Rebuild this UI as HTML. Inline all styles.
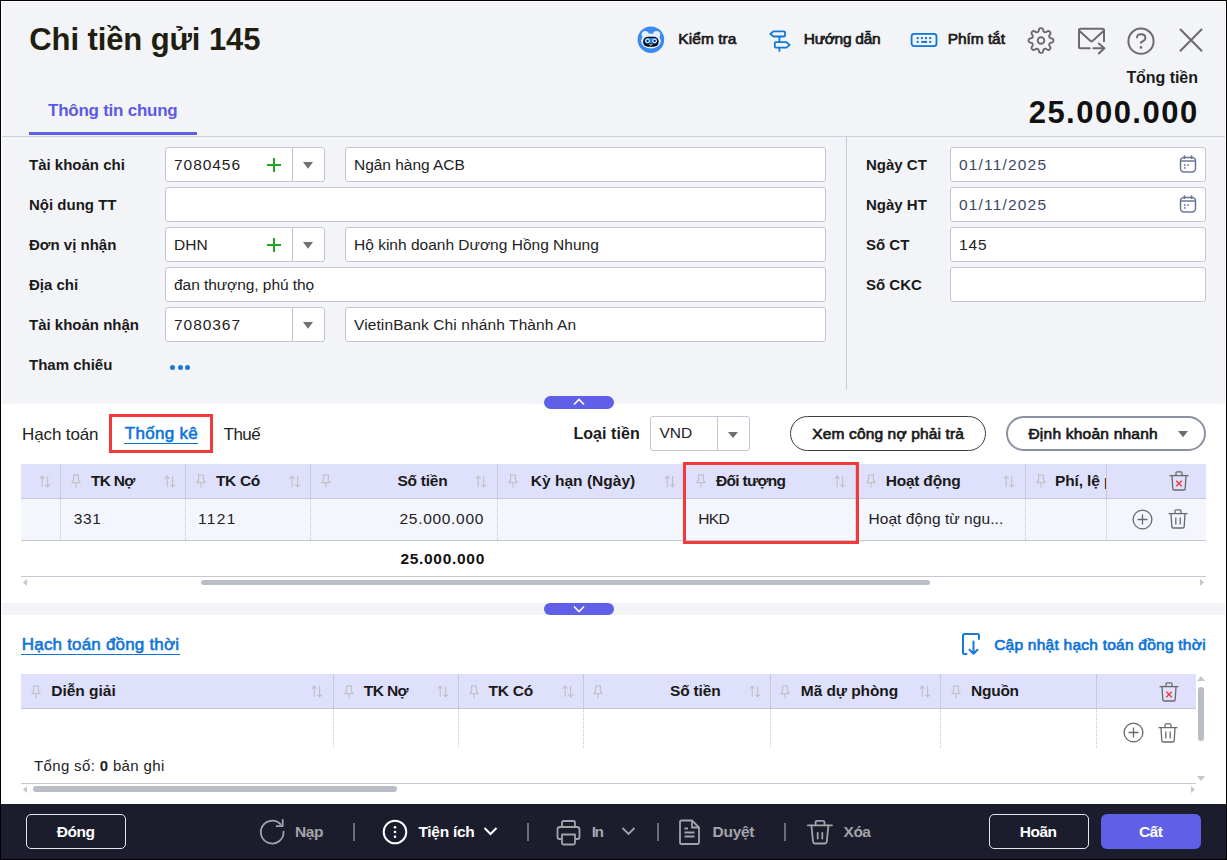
<!DOCTYPE html>
<html><head><meta charset="utf-8"><style>
html,body{margin:0;padding:0;width:1227px;height:860px;overflow:hidden;background:#000}
body{position:relative;font-family:"Liberation Sans",sans-serif}
.t{position:absolute;white-space:nowrap}
svg{overflow:visible}
</style></head><body>
<div style="position:absolute;left:0px;top:0px;width:1227px;height:860px;background:#000"></div>
<div style="position:absolute;left:1px;top:1px;width:1225px;height:858px;background:#fff"></div>
<div style="position:absolute;left:2px;top:2px;width:1223px;height:402px;background:#f3f4f8"></div>
<div style="position:absolute;left:2px;top:136px;width:1223px;height:1px;background:#cdd0dc"></div>
<div class="t" style="left:29.30px;top:20.70px;font-size:31px;line-height:37px;font-weight:700;color:#1f1e10;letter-spacing:-0.100px;">Chi tiền gửi 145</div>
<svg style="position:absolute;left:637px;top:26px" width="28" height="28" viewBox="0 0 28 28"><circle cx="13.9" cy="13.7" r="13.3" fill="#3a8af0"/>
<g fill="#e4effd"><circle cx="8.2" cy="8.6" r="3.6"/><circle cx="19.6" cy="8.6" r="3.6"/><ellipse cx="13.9" cy="15" rx="9.9" ry="7.6"/></g>
<rect x="6.1" y="10.8" width="15.6" height="9.9" rx="4.9" fill="#07070d"/>
<rect x="7.6" y="12" width="12.6" height="5.6" rx="2.8" fill="#1f7cf5"/>
<circle cx="10.6" cy="14.9" r="1.9" fill="#1f7cf5" stroke="#fff" stroke-width="1"/>
<circle cx="17.6" cy="14.9" r="1.9" fill="#1f7cf5" stroke="#fff" stroke-width="1"/>
<circle cx="10.6" cy="14.9" r="0.8" fill="#1a1f3a"/><circle cx="17.6" cy="14.9" r="0.8" fill="#1a1f3a"/>
<path d="M12.4 18.4 Q13.9 19.9 15.4 18.4" stroke="#fff" stroke-width="1" fill="none"/></svg>
<div class="t" style="left:678.35px;top:28.05px;font-size:15.5px;line-height:21.5px;font-weight:400;color:#1a1a1a;letter-spacing:0.043px;-webkit-text-stroke:0.70px #1a1a1a;">Kiểm tra</div>
<svg style="position:absolute;left:768px;top:29px" width="24" height="24" viewBox="0 0 24 24"><g fill="none" stroke="#0f78dc" stroke-width="1.8" stroke-linejoin="round">
<path d="M5.6 2.3 H16 Q17 2.3 17 3.3 V6.5 Q17 7.5 16 7.5 H5.6 L2.3 4.9 Z"/><path d="M7.8 13.2 H18.4 L21.7 15.9 L18.4 18.6 H7.8 Q6.8 18.6 6.8 17.6 V14.2 Q6.8 13.2 7.8 13.2 Z"/><path d="M11.4 7.5 V13.2 M11.4 18.6 V22.8"/></g></svg>
<div class="t" style="left:803.75px;top:28.25px;font-size:15.5px;line-height:21.5px;font-weight:400;color:#1a1a1a;letter-spacing:-0.287px;-webkit-text-stroke:0.70px #1a1a1a;">Hướng dẫn</div>
<svg style="position:absolute;left:910px;top:32px" width="28" height="16" viewBox="0 0 28 16"><rect x="1.6" y="1.8" width="24.9" height="12.4" rx="2.6" fill="none" stroke="#0b75d8" stroke-width="1.8"/>
<g fill="#0b75d8"><rect x="6.7" y="5.1" width="2" height="2"/><rect x="10.9" y="5.1" width="2" height="2"/><rect x="15" y="5.1" width="2" height="2"/><rect x="19.2" y="5.1" width="2" height="2"/>
<rect x="6.7" y="8.9" width="2" height="2"/><rect x="11.3" y="8.9" width="5.8" height="2"/><rect x="19.2" y="8.9" width="2" height="2"/></g></svg>
<div class="t" style="left:947.75px;top:28.05px;font-size:15.5px;line-height:21.5px;font-weight:400;color:#1a1a1a;letter-spacing:-0.071px;-webkit-text-stroke:0.70px #1a1a1a;">Phím tắt</div>
<svg style="position:absolute;left:1026px;top:26px" width="30" height="30" viewBox="0 0 30 30"><path d="M27.40 14.50 L27.39 14.82 L27.34 15.15 L27.25 15.46 L27.10 15.77 L26.84 16.06 L26.43 16.31 L25.86 16.51 L25.22 16.67 L24.66 16.82 L24.24 16.97 L23.95 17.15 L23.76 17.35 L23.62 17.55 L23.50 17.76 L23.41 17.98 L23.32 18.21 L23.25 18.44 L23.21 18.68 L23.20 18.95 L23.28 19.28 L23.47 19.69 L23.77 20.19 L24.10 20.76 L24.36 21.30 L24.47 21.77 L24.45 22.15 L24.35 22.48 L24.18 22.77 L23.99 23.03 L23.77 23.27 L23.53 23.49 L23.27 23.68 L22.98 23.85 L22.65 23.95 L22.27 23.97 L21.80 23.86 L21.26 23.60 L20.69 23.27 L20.19 22.97 L19.78 22.78 L19.45 22.70 L19.18 22.71 L18.94 22.75 L18.71 22.82 L18.48 22.91 L18.26 23.00 L18.05 23.12 L17.85 23.26 L17.65 23.45 L17.47 23.74 L17.32 24.16 L17.17 24.72 L17.01 25.36 L16.81 25.93 L16.56 26.34 L16.27 26.60 L15.96 26.75 L15.65 26.84 L15.32 26.89 L15.00 26.90 L14.68 26.89 L14.35 26.84 L14.04 26.75 L13.73 26.60 L13.44 26.34 L13.19 25.93 L12.99 25.36 L12.83 24.72 L12.68 24.16 L12.53 23.74 L12.35 23.45 L12.15 23.26 L11.95 23.12 L11.74 23.00 L11.52 22.91 L11.29 22.82 L11.06 22.75 L10.82 22.71 L10.55 22.70 L10.22 22.78 L9.81 22.97 L9.31 23.27 L8.74 23.60 L8.20 23.86 L7.73 23.97 L7.35 23.95 L7.02 23.85 L6.73 23.68 L6.47 23.49 L6.23 23.27 L6.01 23.03 L5.82 22.77 L5.65 22.48 L5.55 22.15 L5.53 21.77 L5.64 21.30 L5.90 20.76 L6.23 20.19 L6.53 19.69 L6.72 19.28 L6.80 18.95 L6.79 18.68 L6.75 18.44 L6.68 18.21 L6.59 17.98 L6.50 17.76 L6.38 17.55 L6.24 17.35 L6.05 17.15 L5.76 16.97 L5.34 16.82 L4.78 16.67 L4.14 16.51 L3.57 16.31 L3.16 16.06 L2.90 15.77 L2.75 15.46 L2.66 15.15 L2.61 14.82 L2.60 14.50 L2.61 14.18 L2.66 13.85 L2.75 13.54 L2.90 13.23 L3.16 12.94 L3.57 12.69 L4.14 12.49 L4.78 12.33 L5.34 12.18 L5.76 12.03 L6.05 11.85 L6.24 11.65 L6.38 11.45 L6.50 11.24 L6.59 11.02 L6.68 10.79 L6.75 10.56 L6.79 10.32 L6.80 10.05 L6.72 9.72 L6.53 9.31 L6.23 8.81 L5.90 8.24 L5.64 7.70 L5.53 7.23 L5.55 6.85 L5.65 6.52 L5.82 6.23 L6.01 5.97 L6.23 5.73 L6.47 5.51 L6.73 5.32 L7.02 5.15 L7.35 5.05 L7.73 5.03 L8.20 5.14 L8.74 5.40 L9.31 5.73 L9.81 6.03 L10.22 6.22 L10.55 6.30 L10.82 6.29 L11.06 6.25 L11.29 6.18 L11.52 6.09 L11.74 6.00 L11.95 5.88 L12.15 5.74 L12.35 5.55 L12.53 5.26 L12.68 4.84 L12.83 4.28 L12.99 3.64 L13.19 3.07 L13.44 2.66 L13.73 2.40 L14.04 2.25 L14.35 2.16 L14.68 2.11 L15.00 2.10 L15.32 2.11 L15.65 2.16 L15.96 2.25 L16.27 2.40 L16.56 2.66 L16.81 3.07 L17.01 3.64 L17.17 4.28 L17.32 4.84 L17.47 5.26 L17.65 5.55 L17.85 5.74 L18.05 5.88 L18.26 6.00 L18.48 6.09 L18.71 6.18 L18.94 6.25 L19.18 6.29 L19.45 6.30 L19.78 6.22 L20.19 6.03 L20.69 5.73 L21.26 5.40 L21.80 5.14 L22.27 5.03 L22.65 5.05 L22.98 5.15 L23.27 5.32 L23.53 5.51 L23.77 5.73 L23.99 5.97 L24.18 6.23 L24.35 6.52 L24.45 6.85 L24.47 7.23 L24.36 7.70 L24.10 8.24 L23.77 8.81 L23.47 9.31 L23.28 9.72 L23.20 10.05 L23.21 10.32 L23.25 10.56 L23.32 10.79 L23.41 11.02 L23.50 11.24 L23.62 11.45 L23.76 11.65 L23.95 11.85 L24.24 12.03 L24.66 12.18 L25.22 12.33 L25.86 12.49 L26.43 12.69 L26.84 12.94 L27.10 13.23 L27.25 13.54 L27.34 13.85 L27.39 14.18Z" fill="none" stroke="#6b6b6b" stroke-width="1.9" stroke-linejoin="round"/><circle cx="15" cy="14.5" r="3.3" fill="none" stroke="#6b6b6b" stroke-width="1.9"/></svg>
<svg style="position:absolute;left:1070px;top:20px" width="40" height="40" viewBox="0 0 40 40"><g fill="none" stroke="#6b6b6b" stroke-width="2" stroke-linecap="round" stroke-linejoin="round">
<path d="M19.7 28.3 H10.5 Q9 28.3 9 26.8 V10.3 Q9 8.8 10.5 8.8 H32.5 Q34 8.8 34 10.3 V21.3"/>
<path d="M9.5 11 L20.8 21.2 Q21.5 21.7 22.2 21.2 L33.5 11"/>
<path d="M23.4 28.2 H34.4 M28.8 23.5 L34.4 28.2 L28.8 33.5"/></g></svg>
<svg style="position:absolute;left:1120px;top:20px" width="42" height="42" viewBox="0 0 42 42"><circle cx="21" cy="21.2" r="12.6" fill="none" stroke="#6b6b6b" stroke-width="2"/>
<path d="M17 17.6 Q17 14.3 21 14.3 Q25.4 14.3 25.4 17.8 Q25.4 20.3 21 22.3 V22.8" fill="none" stroke="#6b6b6b" stroke-width="1.9" stroke-linecap="round"/>
<circle cx="21" cy="27.4" r="1.3" fill="#6b6b6b"/></svg>
<svg style="position:absolute;left:1170px;top:20px" width="42" height="42" viewBox="0 0 42 42"><path d="M10.5 9.5 L31.5 30.8 M31.5 9.5 L10.5 30.8" stroke="#6b6b6b" stroke-width="2" stroke-linecap="round"/></svg>
<div class="t" style="left:1126.40px;top:66.60px;font-size:16px;line-height:22px;font-weight:700;color:#1a1a1a;letter-spacing:-0.050px;">Tổng tiền</div>
<div class="t" style="left:1028.70px;top:93.50px;font-size:31px;line-height:37px;font-weight:700;color:#111;letter-spacing:1.478px;">25.000.000</div>
<div class="t" style="left:48.00px;top:98.60px;font-size:17px;line-height:23px;font-weight:700;color:#5b5be2;letter-spacing:-0.243px;">Thông tin chung</div>
<div style="position:absolute;left:29px;top:132px;width:168px;height:3px;background:#5f5fe8"></div>
<div style="position:absolute;left:846px;top:137px;width:1px;height:253px;background:#c9ccd8"></div>
<div class="t" style="left:29.00px;top:154.00px;font-size:15px;line-height:21px;font-weight:700;color:#1a1a1a;letter-spacing:0.000px;">Tài khoản chi</div>
<div class="t" style="left:29.00px;top:194.00px;font-size:15px;line-height:21px;font-weight:700;color:#1a1a1a;letter-spacing:0.000px;">Nội dung TT</div>
<div class="t" style="left:29.00px;top:234.00px;font-size:15px;line-height:21px;font-weight:700;color:#1a1a1a;letter-spacing:0.000px;">Đơn vị nhận</div>
<div class="t" style="left:29.00px;top:274.00px;font-size:15px;line-height:21px;font-weight:700;color:#1a1a1a;letter-spacing:0.000px;">Địa chỉ</div>
<div class="t" style="left:29.00px;top:314.00px;font-size:15px;line-height:21px;font-weight:700;color:#1a1a1a;letter-spacing:0.000px;">Tài khoản nhận</div>
<div class="t" style="left:29.00px;top:354.00px;font-size:15px;line-height:21px;font-weight:700;color:#1a1a1a;letter-spacing:0.000px;">Tham chiếu</div>
<div style="position:absolute;left:165px;top:147px;width:160px;height:35px;box-sizing:border-box;background:#fff;border:1px solid #c4c7d3;border-radius:3px"></div>
<div style="position:absolute;left:292px;top:147px;width:1px;height:35px;background:#c4c7d3"></div>
<svg style="position:absolute;left:302.6px;top:162.3px" width="10" height="6.7" viewBox="0 0 10 6.7"><path d="M0 0 H10 L5.0 6.7Z" fill="#707070"/></svg>
<svg style="position:absolute;left:267px;top:158px" width="14" height="14" viewBox="0 0 14 14"><path d="M7 0 V14 M0 7 H14" stroke="#22a526" stroke-width="2"/></svg>
<div class="t" style="left:174.00px;top:153.75px;font-size:15.5px;line-height:21.5px;font-weight:400;color:#222;letter-spacing:0.950px;">7080456</div>
<div style="position:absolute;left:345px;top:147px;width:481px;height:35px;box-sizing:border-box;background:#fff;border:1px solid #c4c7d3;border-radius:3px"></div>
<div class="t" style="left:354.00px;top:153.75px;font-size:15.5px;line-height:21.5px;font-weight:400;color:#222;letter-spacing:-0.025px;">Ngân hàng ACB</div>
<div style="position:absolute;left:165px;top:187px;width:661px;height:35px;box-sizing:border-box;background:#fff;border:1px solid #c4c7d3;border-radius:3px"></div>
<div style="position:absolute;left:165px;top:227px;width:160px;height:35px;box-sizing:border-box;background:#fff;border:1px solid #c4c7d3;border-radius:3px"></div>
<div style="position:absolute;left:292px;top:227px;width:1px;height:35px;background:#c4c7d3"></div>
<svg style="position:absolute;left:302.6px;top:242.3px" width="10" height="6.7" viewBox="0 0 10 6.7"><path d="M0 0 H10 L5.0 6.7Z" fill="#707070"/></svg>
<svg style="position:absolute;left:267px;top:238px" width="14" height="14" viewBox="0 0 14 14"><path d="M7 0 V14 M0 7 H14" stroke="#22a526" stroke-width="2"/></svg>
<div class="t" style="left:174.00px;top:233.75px;font-size:15.5px;line-height:21.5px;font-weight:400;color:#222;letter-spacing:0.000px;">DHN</div>
<div style="position:absolute;left:345px;top:227px;width:481px;height:35px;box-sizing:border-box;background:#fff;border:1px solid #c4c7d3;border-radius:3px"></div>
<div class="t" style="left:354.00px;top:233.75px;font-size:15.5px;line-height:21.5px;font-weight:400;color:#222;letter-spacing:0.007px;">Hộ kinh doanh Dương Hồng Nhung</div>
<div style="position:absolute;left:165px;top:267px;width:661px;height:35px;box-sizing:border-box;background:#fff;border:1px solid #c4c7d3;border-radius:3px"></div>
<div class="t" style="left:174.00px;top:273.75px;font-size:15.5px;line-height:21.5px;font-weight:400;color:#222;letter-spacing:-0.056px;">đan thượng, phú thọ</div>
<div style="position:absolute;left:165px;top:307px;width:160px;height:35px;box-sizing:border-box;background:#fff;border:1px solid #c4c7d3;border-radius:3px"></div>
<div style="position:absolute;left:292px;top:307px;width:1px;height:35px;background:#c4c7d3"></div>
<svg style="position:absolute;left:302.6px;top:322.3px" width="10" height="6.7" viewBox="0 0 10 6.7"><path d="M0 0 H10 L5.0 6.7Z" fill="#707070"/></svg>
<div class="t" style="left:174.00px;top:313.75px;font-size:15.5px;line-height:21.5px;font-weight:400;color:#222;letter-spacing:0.950px;">7080367</div>
<div style="position:absolute;left:345px;top:307px;width:481px;height:35px;box-sizing:border-box;background:#fff;border:1px solid #c4c7d3;border-radius:3px"></div>
<div class="t" style="left:354.00px;top:313.75px;font-size:15.5px;line-height:21.5px;font-weight:400;color:#222;letter-spacing:0.107px;">VietinBank Chi nhánh Thành An</div>
<div style="position:absolute;left:170.0px;top:364.5px;width:5px;height:5px;border-radius:50%;background:#1a78d8"></div>
<div style="position:absolute;left:177.5px;top:364.5px;width:5px;height:5px;border-radius:50%;background:#1a78d8"></div>
<div style="position:absolute;left:185.0px;top:364.5px;width:5px;height:5px;border-radius:50%;background:#1a78d8"></div>
<div class="t" style="left:866.00px;top:154.00px;font-size:15px;line-height:21px;font-weight:700;color:#1a1a1a;letter-spacing:0.000px;">Ngày CT</div>
<div style="position:absolute;left:950px;top:147px;width:256px;height:35px;box-sizing:border-box;background:#fff;border:1px solid #c4c7d3;border-radius:3px"></div>
<div class="t" style="left:866.00px;top:194.00px;font-size:15px;line-height:21px;font-weight:700;color:#1a1a1a;letter-spacing:0.000px;">Ngày HT</div>
<div style="position:absolute;left:950px;top:187px;width:256px;height:35px;box-sizing:border-box;background:#fff;border:1px solid #c4c7d3;border-radius:3px"></div>
<div class="t" style="left:866.00px;top:234.00px;font-size:15px;line-height:21px;font-weight:700;color:#1a1a1a;letter-spacing:0.000px;">Số CT</div>
<div style="position:absolute;left:950px;top:227px;width:256px;height:35px;box-sizing:border-box;background:#fff;border:1px solid #c4c7d3;border-radius:3px"></div>
<div class="t" style="left:866.00px;top:274.00px;font-size:15px;line-height:21px;font-weight:700;color:#1a1a1a;letter-spacing:0.000px;">Số CKC</div>
<div style="position:absolute;left:950px;top:267px;width:256px;height:35px;box-sizing:border-box;background:#fff;border:1px solid #c4c7d3;border-radius:3px"></div>
<div class="t" style="left:958.90px;top:154.05px;font-size:15.5px;line-height:21.5px;font-weight:400;color:#3d4766;letter-spacing:1.189px;">01/11/2025</div>
<svg style="position:absolute;left:1179px;top:154px" width="18" height="19" viewBox="0 0 18 19"><g fill="none" stroke="#6c7596" stroke-width="1.5"><rect x="1.5" y="3.4" width="15" height="14.5" rx="3.5"/><path d="M1.5 6.9 H16.5 M5.5 1.2 V5 M12.5 1.2 V5"/></g>
<g fill="#6c7596"><rect x="5" y="10.3" width="1.6" height="1.6"/><rect x="8.2" y="10.3" width="1.6" height="1.6"/><rect x="5" y="13.1" width="1.6" height="1.6"/></g></svg>
<div class="t" style="left:958.90px;top:194.05px;font-size:15.5px;line-height:21.5px;font-weight:400;color:#3d4766;letter-spacing:1.189px;">01/11/2025</div>
<svg style="position:absolute;left:1179px;top:194px" width="18" height="19" viewBox="0 0 18 19"><g fill="none" stroke="#6c7596" stroke-width="1.5"><rect x="1.5" y="3.4" width="15" height="14.5" rx="3.5"/><path d="M1.5 6.9 H16.5 M5.5 1.2 V5 M12.5 1.2 V5"/></g>
<g fill="#6c7596"><rect x="5" y="10.3" width="1.6" height="1.6"/><rect x="8.2" y="10.3" width="1.6" height="1.6"/><rect x="5" y="13.1" width="1.6" height="1.6"/></g></svg>
<div class="t" style="left:958.90px;top:234.05px;font-size:15.5px;line-height:21.5px;font-weight:400;color:#222;letter-spacing:0.900px;">145</div>
<div style="position:absolute;left:544px;top:396px;width:70px;height:13px;background:#5f5fe8;border-radius:7px"></div>
<svg style="position:absolute;left:573px;top:398px" width="12" height="8" viewBox="0 0 12 8"><path d="M1 6.5 L6 1.5 L11 6.5" fill="none" stroke="#fff" stroke-width="1.6"/></svg>
<div class="t" style="left:22.10px;top:422.80px;font-size:17px;line-height:23px;font-weight:400;color:#222;letter-spacing:-0.137px;">Hạch toán</div>
<div style="position:absolute;left:109px;top:414px;width:104px;height:39px;box-sizing:border-box;border:3px solid #f23a3d"></div>
<div class="t" style="left:124.69px;top:422.30px;font-size:17px;line-height:23px;font-weight:400;color:#0f74d8;letter-spacing:0.317px;-webkit-text-stroke:0.58px #0f74d8;">Thống kê</div>
<div style="position:absolute;left:124px;top:443px;width:74px;height:1px;background:#0f74d8"></div>
<div class="t" style="left:223.50px;top:422.80px;font-size:17px;line-height:23px;font-weight:400;color:#222;letter-spacing:-0.500px;">Thuế</div>
<div class="t" style="left:573.40px;top:423.10px;font-size:16px;line-height:22px;font-weight:700;color:#1a1a1a;letter-spacing:0.062px;">Loại tiền</div>
<div style="position:absolute;left:650px;top:416px;width:100px;height:35px;box-sizing:border-box;background:#fff;border:1px solid #c4c7d3;border-radius:3px"></div>
<div style="position:absolute;left:717px;top:416px;width:1px;height:35px;background:#c4c7d3"></div>
<svg style="position:absolute;left:728px;top:432px" width="10" height="6" viewBox="0 0 10 6"><path d="M0 0 H10 L5.0 6Z" fill="#707070"/></svg>
<div class="t" style="left:659.40px;top:422.45px;font-size:15.5px;line-height:21.5px;font-weight:400;color:#222;letter-spacing:0.000px;">VND</div>
<div style="position:absolute;left:790px;top:416px;width:196px;height:35px;box-sizing:border-box;border:1px solid #3c3c3c;border-radius:18px;background:#fff"></div>
<div class="t" style="left:812.25px;top:422.75px;font-size:15.5px;line-height:21.5px;font-weight:400;color:#1a1a1a;letter-spacing:0.142px;-webkit-text-stroke:0.70px #1a1a1a;">Xem công nợ phải trả</div>
<div style="position:absolute;left:1006px;top:416px;width:200px;height:35px;box-sizing:border-box;border:2px solid #8c91a1;border-radius:18px;background:#fff"></div>
<div class="t" style="left:1028.45px;top:422.75px;font-size:15.5px;line-height:21.5px;font-weight:400;color:#1a1a1a;letter-spacing:0.227px;-webkit-text-stroke:0.70px #1a1a1a;">Định khoản nhanh</div>
<svg style="position:absolute;left:1177.5px;top:431.3px" width="10" height="6.2" viewBox="0 0 10 6.2"><path d="M0 0 H10 L5.0 6.2Z" fill="#6e6e6e"/></svg>
<div style="position:absolute;left:21px;top:464px;width:1185px;height:34px;background:#dfe0fb"></div>
<div style="position:absolute;left:21px;top:498px;width:1185px;height:1px;background:#c5c7d2"></div>
<div style="position:absolute;left:21px;top:499px;width:1185px;height:41px;background:#f4f6fe"></div>
<div style="position:absolute;left:21px;top:540px;width:1185px;height:1px;background:#c5c7d2"></div>
<div style="position:absolute;left:21px;top:576px;width:1185px;height:1px;background:#c5c7d2"></div>
<div style="position:absolute;left:60px;top:464px;width:1px;height:34px;background:#c9cad6"></div>
<div style="position:absolute;left:60px;top:499px;width:0;height:41px;border-left:1px dotted #c3c3c8"></div>
<div style="position:absolute;left:185px;top:464px;width:1px;height:34px;background:#c9cad6"></div>
<div style="position:absolute;left:185px;top:499px;width:0;height:41px;border-left:1px dotted #c3c3c8"></div>
<div style="position:absolute;left:310px;top:464px;width:1px;height:34px;background:#c9cad6"></div>
<div style="position:absolute;left:310px;top:499px;width:0;height:41px;border-left:1px dotted #c3c3c8"></div>
<div style="position:absolute;left:497px;top:464px;width:1px;height:34px;background:#c9cad6"></div>
<div style="position:absolute;left:497px;top:499px;width:0;height:41px;border-left:1px dotted #c3c3c8"></div>
<div style="position:absolute;left:684px;top:464px;width:1px;height:34px;background:#c9cad6"></div>
<div style="position:absolute;left:684px;top:499px;width:0;height:41px;border-left:1px dotted #c3c3c8"></div>
<div style="position:absolute;left:855px;top:464px;width:1px;height:34px;background:#c9cad6"></div>
<div style="position:absolute;left:855px;top:499px;width:0;height:41px;border-left:1px dotted #c3c3c8"></div>
<div style="position:absolute;left:1025px;top:464px;width:1px;height:34px;background:#c9cad6"></div>
<div style="position:absolute;left:1025px;top:499px;width:0;height:41px;border-left:1px dotted #c3c3c8"></div>
<div style="position:absolute;left:1106px;top:464px;width:1px;height:34px;background:#c9cad6"></div>
<div style="position:absolute;left:1106px;top:499px;width:0;height:41px;border-left:1px dotted #c3c3c8"></div>
<svg style="position:absolute;left:39px;top:475px" width="12" height="13" viewBox="0 0 12 13"><path d="M3.2 12 V1.2 M0.8 3.6 L3.2 1.2 L5.6 3.6 M8.6 1 V11.8 M6.2 9.4 L8.6 11.8 L11 9.4" fill="none" stroke="#c2c3c9" stroke-width="1.2"/></svg>
<svg style="position:absolute;left:71px;top:474px" width="10" height="14" viewBox="0 0 10 14"><path d="M2.6 0.8 H7.4 V6.2 L9.2 8.6 H0.8 L2.6 6.2 Z M5 8.6 V13.6" fill="none" stroke="#c2c3c9" stroke-width="1.2" stroke-linejoin="round"/></svg>
<div class="t" style="left:90.90px;top:469.95px;font-size:15.5px;line-height:21.5px;font-weight:700;color:#1a1a1a;letter-spacing:-0.725px;">TK Nợ</div>
<svg style="position:absolute;left:164px;top:475px" width="12" height="13" viewBox="0 0 12 13"><path d="M3.2 12 V1.2 M0.8 3.6 L3.2 1.2 L5.6 3.6 M8.6 1 V11.8 M6.2 9.4 L8.6 11.8 L11 9.4" fill="none" stroke="#c2c3c9" stroke-width="1.2"/></svg>
<svg style="position:absolute;left:196px;top:474px" width="10" height="14" viewBox="0 0 10 14"><path d="M2.6 0.8 H7.4 V6.2 L9.2 8.6 H0.8 L2.6 6.2 Z M5 8.6 V13.6" fill="none" stroke="#c2c3c9" stroke-width="1.2" stroke-linejoin="round"/></svg>
<div class="t" style="left:216.00px;top:469.95px;font-size:15.5px;line-height:21.5px;font-weight:700;color:#1a1a1a;letter-spacing:-0.350px;">TK Có</div>
<svg style="position:absolute;left:289px;top:475px" width="12" height="13" viewBox="0 0 12 13"><path d="M3.2 12 V1.2 M0.8 3.6 L3.2 1.2 L5.6 3.6 M8.6 1 V11.8 M6.2 9.4 L8.6 11.8 L11 9.4" fill="none" stroke="#c2c3c9" stroke-width="1.2"/></svg>
<svg style="position:absolute;left:321px;top:474px" width="10" height="14" viewBox="0 0 10 14"><path d="M2.6 0.8 H7.4 V6.2 L9.2 8.6 H0.8 L2.6 6.2 Z M5 8.6 V13.6" fill="none" stroke="#c2c3c9" stroke-width="1.2" stroke-linejoin="round"/></svg>
<div class="t" style="left:397.50px;top:469.95px;font-size:15.5px;line-height:21.5px;font-weight:700;color:#1a1a1a;letter-spacing:-0.250px;">Số tiền</div>
<svg style="position:absolute;left:475px;top:475px" width="12" height="13" viewBox="0 0 12 13"><path d="M3.2 12 V1.2 M0.8 3.6 L3.2 1.2 L5.6 3.6 M8.6 1 V11.8 M6.2 9.4 L8.6 11.8 L11 9.4" fill="none" stroke="#c2c3c9" stroke-width="1.2"/></svg>
<svg style="position:absolute;left:508px;top:474px" width="10" height="14" viewBox="0 0 10 14"><path d="M2.6 0.8 H7.4 V6.2 L9.2 8.6 H0.8 L2.6 6.2 Z M5 8.6 V13.6" fill="none" stroke="#c2c3c9" stroke-width="1.2" stroke-linejoin="round"/></svg>
<div class="t" style="left:530.80px;top:469.95px;font-size:15.5px;line-height:21.5px;font-weight:700;color:#1a1a1a;letter-spacing:0.017px;">Kỳ hạn (Ngày)</div>
<svg style="position:absolute;left:664px;top:475px" width="12" height="13" viewBox="0 0 12 13"><path d="M3.2 12 V1.2 M0.8 3.6 L3.2 1.2 L5.6 3.6 M8.6 1 V11.8 M6.2 9.4 L8.6 11.8 L11 9.4" fill="none" stroke="#c2c3c9" stroke-width="1.2"/></svg>
<svg style="position:absolute;left:696px;top:474px" width="10" height="14" viewBox="0 0 10 14"><path d="M2.6 0.8 H7.4 V6.2 L9.2 8.6 H0.8 L2.6 6.2 Z M5 8.6 V13.6" fill="none" stroke="#c2c3c9" stroke-width="1.2" stroke-linejoin="round"/></svg>
<div class="t" style="left:715.90px;top:469.95px;font-size:15.5px;line-height:21.5px;font-weight:700;color:#1a1a1a;letter-spacing:-0.688px;">Đối tượng</div>
<svg style="position:absolute;left:834px;top:475px" width="12" height="13" viewBox="0 0 12 13"><path d="M3.2 12 V1.2 M0.8 3.6 L3.2 1.2 L5.6 3.6 M8.6 1 V11.8 M6.2 9.4 L8.6 11.8 L11 9.4" fill="none" stroke="#c2c3c9" stroke-width="1.2"/></svg>
<svg style="position:absolute;left:866px;top:474px" width="10" height="14" viewBox="0 0 10 14"><path d="M2.6 0.8 H7.4 V6.2 L9.2 8.6 H0.8 L2.6 6.2 Z M5 8.6 V13.6" fill="none" stroke="#c2c3c9" stroke-width="1.2" stroke-linejoin="round"/></svg>
<div class="t" style="left:885.70px;top:469.95px;font-size:15.5px;line-height:21.5px;font-weight:700;color:#1a1a1a;letter-spacing:-0.213px;">Hoạt động</div>
<svg style="position:absolute;left:1003px;top:475px" width="12" height="13" viewBox="0 0 12 13"><path d="M3.2 12 V1.2 M0.8 3.6 L3.2 1.2 L5.6 3.6 M8.6 1 V11.8 M6.2 9.4 L8.6 11.8 L11 9.4" fill="none" stroke="#c2c3c9" stroke-width="1.2"/></svg>
<svg style="position:absolute;left:1036px;top:474px" width="10" height="14" viewBox="0 0 10 14"><path d="M2.6 0.8 H7.4 V6.2 L9.2 8.6 H0.8 L2.6 6.2 Z M5 8.6 V13.6" fill="none" stroke="#c2c3c9" stroke-width="1.2" stroke-linejoin="round"/></svg>
<div style="position:absolute;left:1026px;top:464px;width:80px;height:34px;overflow:hidden">
<div class="t" style="left:29.00px;top:5.95px;font-size:15.5px;line-height:21.5px;font-weight:700;color:#1a1a1a;letter-spacing:-0.125px;">Phí, lệ p</div>
</div>
<svg style="position:absolute;left:1169px;top:471px" width="20" height="20" viewBox="0 0 20 20"><g fill="none" stroke="#6a6a6a" stroke-width="1.3" stroke-linejoin="round"><path d="M0.5 4.6 H19.5"/><path d="M7 4.6 V2 Q7 0.8 8.2 0.8 H11.8 Q13 0.8 13 2 V4.6"/><path d="M3 4.6 L3.8 17.6 Q3.9 19 5.3 19 H14.7 Q16.1 19 16.2 17.6 L17 4.6"/></g>
<path d="M7.3 9.8 L12.7 15.2 M12.7 9.8 L7.3 15.2" stroke="#ee3b3b" stroke-width="1.4"/></svg>
<div class="t" style="left:73.70px;top:507.75px;font-size:15.5px;line-height:21.5px;font-weight:400;color:#222;letter-spacing:0.650px;">331</div>
<div class="t" style="left:198.00px;top:507.75px;font-size:15.5px;line-height:21.5px;font-weight:400;color:#222;letter-spacing:1.333px;">1121</div>
<div class="t" style="left:399.50px;top:507.75px;font-size:15.5px;line-height:21.5px;font-weight:400;color:#222;letter-spacing:0.700px;">25.000.000</div>
<div class="t" style="left:698.20px;top:507.75px;font-size:15.5px;line-height:21.5px;font-weight:400;color:#222;letter-spacing:-0.600px;">HKD</div>
<div class="t" style="left:868.50px;top:507.75px;font-size:15.5px;line-height:21.5px;font-weight:400;color:#222;letter-spacing:0.061px;">Hoạt động từ ngu...</div>
<svg style="position:absolute;left:1132px;top:509px" width="21" height="21" viewBox="0 0 21 21"><circle cx="10.5" cy="10.5" r="9.4" fill="none" stroke="#6a6a6a" stroke-width="1.3"/><path d="M10.5 5.5 V15.5 M5.5 10.5 H15.5" stroke="#6a6a6a" stroke-width="1.3"/></svg>
<svg style="position:absolute;left:1167.5px;top:509.3px" width="20" height="20" viewBox="0 0 20 20"><g fill="none" stroke="#6a6a6a" stroke-width="1.3" stroke-linejoin="round"><path d="M0.5 4.6 H19.5"/><path d="M7 4.6 V2 Q7 0.8 8.2 0.8 H11.8 Q13 0.8 13 2 V4.6"/><path d="M3 4.6 L3.8 17.6 Q3.9 19 5.3 19 H14.7 Q16.1 19 16.2 17.6 L17 4.6"/><path d="M7.8 8.5 V15.5 M12.2 8.5 V15.5"/></g></svg>
<div class="t" style="left:400.40px;top:547.75px;font-size:15.5px;line-height:21.5px;font-weight:700;color:#111;letter-spacing:0.700px;">25.000.000</div>
<div style="position:absolute;left:683px;top:462px;width:176px;height:82px;box-sizing:border-box;border:3px solid #f23a3d"></div>
<div style="position:absolute;left:201px;top:580px;width:729px;height:5px;background:#b9bdc6;border-radius:3px"></div>
<svg style="position:absolute;left:23px;top:579px" width="5" height="7" viewBox="0 0 5 7"><path d="M4 0 V7 L0 3.5Z" fill="#c4c7ce"/></svg>
<svg style="position:absolute;left:1199px;top:579px" width="5" height="7" viewBox="0 0 5 7"><path d="M1 0 V7 L5 3.5Z" fill="#c4c7ce"/></svg>
<div style="position:absolute;left:2px;top:603px;width:1223px;height:12px;background:#f3f4f8"></div>
<div style="position:absolute;left:544px;top:603px;width:70px;height:12px;background:#5f5fe8;border-radius:6px"></div>
<svg style="position:absolute;left:573px;top:604.5px" width="12" height="8" viewBox="0 0 12 8"><path d="M1 1.5 L6 6.5 L11 1.5" fill="none" stroke="#fff" stroke-width="1.6"/></svg>
<div class="t" style="left:21.79px;top:632.50px;font-size:17px;line-height:23px;font-weight:400;color:#0f74d8;letter-spacing:0.190px;-webkit-text-stroke:0.58px #0f74d8;">Hạch toán đồng thời</div>
<div style="position:absolute;left:21px;top:653.5px;width:158.5px;height:1.3px;background:#0f74d8"></div>
<svg style="position:absolute;left:960px;top:631px" width="24" height="26" viewBox="0 0 24 26"><g fill="none" stroke="#1a78d8" stroke-width="2" stroke-linecap="round" stroke-linejoin="round">
<path d="M6.5 23 H4.5 Q3 23 3 21.5 V4.5 Q3 3 4.5 3 H17.5 Q19 3 19 4.5 V8"/>
<path d="M13.5 10.5 V22.5 M9.5 18.8 L13.5 22.8 L17.5 18.8"/></g></svg>
<div class="t" style="left:994.15px;top:633.95px;font-size:15.5px;line-height:21.5px;font-weight:400;color:#0f74d8;letter-spacing:0.241px;-webkit-text-stroke:0.70px #0f74d8;">Cập nhật hạch toán đồng thời</div>
<div style="position:absolute;left:21px;top:674px;width:1175px;height:34px;background:#dfe0fb"></div>
<div style="position:absolute;left:21px;top:708px;width:1175px;height:1px;background:#c5c7d2"></div>
<div style="position:absolute;left:333px;top:674px;width:1px;height:34px;background:#c9cad6"></div>
<div style="position:absolute;left:333px;top:709px;width:0;height:39px;border-left:1px dotted #c3c3c8"></div>
<div style="position:absolute;left:458px;top:674px;width:1px;height:34px;background:#c9cad6"></div>
<div style="position:absolute;left:458px;top:709px;width:0;height:39px;border-left:1px dotted #c3c3c8"></div>
<div style="position:absolute;left:583px;top:674px;width:1px;height:34px;background:#c9cad6"></div>
<div style="position:absolute;left:583px;top:709px;width:0;height:39px;border-left:1px dotted #c3c3c8"></div>
<div style="position:absolute;left:770px;top:674px;width:1px;height:34px;background:#c9cad6"></div>
<div style="position:absolute;left:770px;top:709px;width:0;height:39px;border-left:1px dotted #c3c3c8"></div>
<div style="position:absolute;left:940px;top:674px;width:1px;height:34px;background:#c9cad6"></div>
<div style="position:absolute;left:940px;top:709px;width:0;height:39px;border-left:1px dotted #c3c3c8"></div>
<div style="position:absolute;left:1096px;top:674px;width:1px;height:34px;background:#c9cad6"></div>
<div style="position:absolute;left:1096px;top:709px;width:0;height:39px;border-left:1px dotted #c3c3c8"></div>
<svg style="position:absolute;left:31px;top:685.3px" width="10" height="14" viewBox="0 0 10 14"><path d="M2.6 0.8 H7.4 V6.2 L9.2 8.6 H0.8 L2.6 6.2 Z M5 8.6 V13.6" fill="none" stroke="#c2c3c9" stroke-width="1.2" stroke-linejoin="round"/></svg>
<div class="t" style="left:51.20px;top:680.05px;font-size:15.5px;line-height:21.5px;font-weight:700;color:#1a1a1a;letter-spacing:0.000px;">Diễn giải</div>
<svg style="position:absolute;left:311px;top:685px" width="12" height="13" viewBox="0 0 12 13"><path d="M3.2 12 V1.2 M0.8 3.6 L3.2 1.2 L5.6 3.6 M8.6 1 V11.8 M6.2 9.4 L8.6 11.8 L11 9.4" fill="none" stroke="#c2c3c9" stroke-width="1.2"/></svg>
<svg style="position:absolute;left:344px;top:685.3px" width="10" height="14" viewBox="0 0 10 14"><path d="M2.6 0.8 H7.4 V6.2 L9.2 8.6 H0.8 L2.6 6.2 Z M5 8.6 V13.6" fill="none" stroke="#c2c3c9" stroke-width="1.2" stroke-linejoin="round"/></svg>
<div class="t" style="left:363.80px;top:680.05px;font-size:15.5px;line-height:21.5px;font-weight:700;color:#1a1a1a;letter-spacing:-0.625px;">TK Nợ</div>
<svg style="position:absolute;left:437px;top:685px" width="12" height="13" viewBox="0 0 12 13"><path d="M3.2 12 V1.2 M0.8 3.6 L3.2 1.2 L5.6 3.6 M8.6 1 V11.8 M6.2 9.4 L8.6 11.8 L11 9.4" fill="none" stroke="#c2c3c9" stroke-width="1.2"/></svg>
<svg style="position:absolute;left:469px;top:685.3px" width="10" height="14" viewBox="0 0 10 14"><path d="M2.6 0.8 H7.4 V6.2 L9.2 8.6 H0.8 L2.6 6.2 Z M5 8.6 V13.6" fill="none" stroke="#c2c3c9" stroke-width="1.2" stroke-linejoin="round"/></svg>
<div class="t" style="left:488.60px;top:680.05px;font-size:15.5px;line-height:21.5px;font-weight:700;color:#1a1a1a;letter-spacing:-0.250px;">TK Có</div>
<svg style="position:absolute;left:562px;top:685px" width="12" height="13" viewBox="0 0 12 13"><path d="M3.2 12 V1.2 M0.8 3.6 L3.2 1.2 L5.6 3.6 M8.6 1 V11.8 M6.2 9.4 L8.6 11.8 L11 9.4" fill="none" stroke="#c2c3c9" stroke-width="1.2"/></svg>
<svg style="position:absolute;left:593px;top:685.3px" width="10" height="14" viewBox="0 0 10 14"><path d="M2.6 0.8 H7.4 V6.2 L9.2 8.6 H0.8 L2.6 6.2 Z M5 8.6 V13.6" fill="none" stroke="#c2c3c9" stroke-width="1.2" stroke-linejoin="round"/></svg>
<div class="t" style="left:670.00px;top:680.05px;font-size:15.5px;line-height:21.5px;font-weight:700;color:#1a1a1a;letter-spacing:-0.167px;">Số tiền</div>
<svg style="position:absolute;left:749px;top:685px" width="12" height="13" viewBox="0 0 12 13"><path d="M3.2 12 V1.2 M0.8 3.6 L3.2 1.2 L5.6 3.6 M8.6 1 V11.8 M6.2 9.4 L8.6 11.8 L11 9.4" fill="none" stroke="#c2c3c9" stroke-width="1.2"/></svg>
<svg style="position:absolute;left:780px;top:685.3px" width="10" height="14" viewBox="0 0 10 14"><path d="M2.6 0.8 H7.4 V6.2 L9.2 8.6 H0.8 L2.6 6.2 Z M5 8.6 V13.6" fill="none" stroke="#c2c3c9" stroke-width="1.2" stroke-linejoin="round"/></svg>
<div class="t" style="left:800.80px;top:680.05px;font-size:15.5px;line-height:21.5px;font-weight:700;color:#1a1a1a;letter-spacing:-0.080px;">Mã dự phòng</div>
<svg style="position:absolute;left:919px;top:685px" width="12" height="13" viewBox="0 0 12 13"><path d="M3.2 12 V1.2 M0.8 3.6 L3.2 1.2 L5.6 3.6 M8.6 1 V11.8 M6.2 9.4 L8.6 11.8 L11 9.4" fill="none" stroke="#c2c3c9" stroke-width="1.2"/></svg>
<svg style="position:absolute;left:951px;top:685.3px" width="10" height="14" viewBox="0 0 10 14"><path d="M2.6 0.8 H7.4 V6.2 L9.2 8.6 H0.8 L2.6 6.2 Z M5 8.6 V13.6" fill="none" stroke="#c2c3c9" stroke-width="1.2" stroke-linejoin="round"/></svg>
<div class="t" style="left:971.00px;top:680.05px;font-size:15.5px;line-height:21.5px;font-weight:700;color:#1a1a1a;letter-spacing:-0.250px;">Nguồn</div>
<svg style="position:absolute;left:1159px;top:682px" width="20" height="20" viewBox="0 0 20 20"><g fill="none" stroke="#6a6a6a" stroke-width="1.3" stroke-linejoin="round"><path d="M0.5 4.6 H19.5"/><path d="M7 4.6 V2 Q7 0.8 8.2 0.8 H11.8 Q13 0.8 13 2 V4.6"/><path d="M3 4.6 L3.8 17.6 Q3.9 19 5.3 19 H14.7 Q16.1 19 16.2 17.6 L17 4.6"/></g>
<path d="M7.3 9.8 L12.7 15.2 M12.7 9.8 L7.3 15.2" stroke="#ee3b3b" stroke-width="1.4"/></svg>
<svg style="position:absolute;left:1122.5px;top:722px" width="21" height="21" viewBox="0 0 21 21"><circle cx="10.5" cy="10.5" r="9.4" fill="none" stroke="#6a6a6a" stroke-width="1.3"/><path d="M10.5 5.5 V15.5 M5.5 10.5 H15.5" stroke="#6a6a6a" stroke-width="1.3"/></svg>
<svg style="position:absolute;left:1157.5px;top:722.5px" width="20" height="20" viewBox="0 0 20 20"><g fill="none" stroke="#6a6a6a" stroke-width="1.3" stroke-linejoin="round"><path d="M0.5 4.6 H19.5"/><path d="M7 4.6 V2 Q7 0.8 8.2 0.8 H11.8 Q13 0.8 13 2 V4.6"/><path d="M3 4.6 L3.8 17.6 Q3.9 19 5.3 19 H14.7 Q16.1 19 16.2 17.6 L17 4.6"/><path d="M7.8 8.5 V15.5 M12.2 8.5 V15.5"/></g></svg>
<svg style="position:absolute;left:1197px;top:676px" width="8" height="5" viewBox="0 0 8 5"><path d="M0 5 H8 L4 0Z" fill="#c4c7ce"/></svg>
<div style="position:absolute;left:1198px;top:687px;width:6px;height:54px;background:#b9bdc6;border-radius:3px"></div>
<svg style="position:absolute;left:1197px;top:776px" width="8" height="5" viewBox="0 0 8 5"><path d="M0 0 H8 L4 5Z" fill="#c4c7ce"/></svg>
<div class="t" style="left:34px;top:756px;font-size:15px;line-height:20px;color:#222;letter-spacing:0.35px">Tổng số: <b>0</b> bản ghi</div>
<div style="position:absolute;left:21px;top:783px;width:1175px;height:1px;background:#c5c7d2"></div>
<div style="position:absolute;left:33px;top:786px;width:364px;height:6px;background:#b9bdc6;border-radius:3px"></div>
<svg style="position:absolute;left:23px;top:786px" width="5" height="7" viewBox="0 0 5 7"><path d="M4 0 V7 L0 3.5Z" fill="#c4c7ce"/></svg>
<svg style="position:absolute;left:1190px;top:786px" width="5" height="7" viewBox="0 0 5 7"><path d="M1 0 V7 L5 3.5Z" fill="#c4c7ce"/></svg>
<div style="position:absolute;left:1px;top:804px;width:1225px;height:55px;background:#1c1d2c"></div>
<div style="position:absolute;left:26px;top:814px;width:100px;height:35px;box-sizing:border-box;border:1.2px solid #e6e6ea;border-radius:5px"></div>
<div class="t" style="left:56.70px;top:820.75px;font-size:15.5px;line-height:21.5px;font-weight:700;color:#fff;letter-spacing:-0.433px;">Đóng</div>
<svg style="position:absolute;left:258px;top:818px" width="28" height="28" viewBox="0 0 28 28"><g fill="none" stroke="#a3a3aa" stroke-width="1.8" stroke-linecap="round" stroke-linejoin="round"><path d="M25.6 13.6 A11.4 11.4 0 1 1 22.6 6.4"/><path d="M24.7 2 V8.1 H18.6"/></g></svg>
<div class="t" style="left:295.10px;top:821.35px;font-size:15.5px;line-height:21.5px;font-weight:700;color:#a3a3aa;letter-spacing:-0.450px;">Nạp</div>
<div style="position:absolute;left:353px;top:823px;width:2px;height:18px;background:#6b6d78"></div>
<svg style="position:absolute;left:382px;top:819px" width="26" height="26" viewBox="0 0 26 26"><circle cx="13" cy="13" r="11.3" fill="none" stroke="#fff" stroke-width="2"/><g fill="#fff"><circle cx="13" cy="8.3" r="1.3"/><circle cx="13" cy="13" r="1.3"/><circle cx="13" cy="17.7" r="1.3"/></g></svg>
<div class="t" style="left:418.40px;top:821.35px;font-size:15.5px;line-height:21.5px;font-weight:700;color:#fff;letter-spacing:-0.271px;">Tiện ích</div>
<svg style="position:absolute;left:483px;top:826px" width="15" height="10" viewBox="0 0 15 10"><path d="M1.5 2 L7.5 8 L13.5 2" fill="none" stroke="#fff" stroke-width="2"/></svg>
<div style="position:absolute;left:527px;top:823px;width:2px;height:18px;background:#6b6d78"></div>
<svg style="position:absolute;left:555px;top:819px" width="28" height="28" viewBox="0 0 28 28"><g fill="none" stroke="#a3a3aa" stroke-width="1.8" stroke-linejoin="round"><path d="M7 8 V3.5 Q7 2 8.5 2 H18.5 Q20 2 20 3.5 V8"/><path d="M7 20 H4.5 Q2.5 20 2.5 18 V10.5 Q2.5 8 5 8 H22 Q24.5 8 24.5 10.5 V18 Q24.5 20 22.5 20 H20"/><path d="M7 15.5 H20 V24 Q20 25.5 18.5 25.5 H8.5 Q7 25.5 7 24Z"/></g></svg>
<div class="t" style="left:591.80px;top:821.35px;font-size:15.5px;line-height:21.5px;font-weight:700;color:#a3a3aa;letter-spacing:-1.600px;">In</div>
<svg style="position:absolute;left:621px;top:826px" width="15" height="10" viewBox="0 0 15 10"><path d="M1.5 2 L7.5 8 L13.5 2" fill="none" stroke="#a3a3aa" stroke-width="1.8"/></svg>
<div style="position:absolute;left:657px;top:823px;width:2px;height:18px;background:#6b6d78"></div>
<svg style="position:absolute;left:678px;top:818px" width="24" height="28" viewBox="0 0 24 28"><g fill="none" stroke="#a3a3aa" stroke-width="1.8" stroke-linejoin="round"><path d="M3.5 2.5 H14 L21 9.5 V24.5 Q21 26 19.5 26 H3.5 Q2 26 2 24.5 V4 Q2 2.5 3.5 2.5Z"/><path d="M14 2.5 V9.5 H21"/><path d="M6.5 14.5 H16.5 M6.5 18.5 H16.5 M6.5 10.5 H10"/></g></svg>
<div class="t" style="left:712.60px;top:821.35px;font-size:15.5px;line-height:21.5px;font-weight:700;color:#a3a3aa;letter-spacing:-0.300px;">Duyệt</div>
<div style="position:absolute;left:784px;top:823px;width:2px;height:18px;background:#6b6d78"></div>
<svg style="position:absolute;left:806px;top:818px" width="28" height="28" viewBox="0 0 28 28"><g fill="none" stroke="#a3a3aa" stroke-width="1.8" stroke-linejoin="round" stroke-linecap="round"><path d="M1.8 7.3 H26"/><path d="M9.6 7.3 V4.3 Q9.6 2.8 11.1 2.8 H17 Q18.5 2.8 18.5 4.3 V7.3"/><path d="M5.4 7.3 L7.1 24 Q7.3 25.5 8.8 25.5 H19 Q20.5 25.5 20.7 24 L22.4 7.3"/><path d="M11.7 14.8 V20.5 M16.3 14.8 V20.5"/></g></svg>
<div class="t" style="left:843.60px;top:821.35px;font-size:15.5px;line-height:21.5px;font-weight:700;color:#a3a3aa;letter-spacing:-0.550px;">Xóa</div>
<div style="position:absolute;left:989px;top:814px;width:100px;height:35px;box-sizing:border-box;border:1.2px solid #e6e6ea;border-radius:5px"></div>
<div class="t" style="left:1019.80px;top:820.75px;font-size:15.5px;line-height:21.5px;font-weight:700;color:#fff;letter-spacing:-0.500px;">Hoãn</div>
<div style="position:absolute;left:1101px;top:814px;width:100px;height:35px;background:#5f5fe8;border-radius:6px"></div>
<div class="t" style="left:1138.90px;top:820.75px;font-size:15.5px;line-height:21.5px;font-weight:700;color:#fff;letter-spacing:-0.500px;">Cất</div>
</body></html>
